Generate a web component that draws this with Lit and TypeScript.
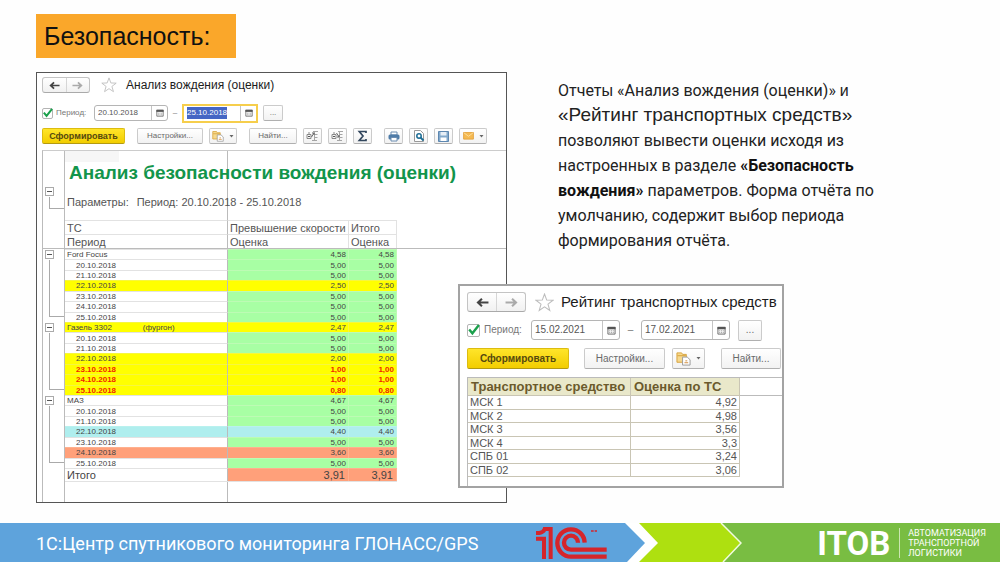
import { LitElement, html, css, svg, nothing } from "lit";
import { customElement, query } from "lit/decorators.js";
import { classMap } from "lit/directives/class-map.js";

const controls = css`
  :host, * { box-sizing: border-box; }
  button, input { font: inherit; color: inherit; margin: 0; }
  button { padding: 0; cursor: pointer; }
  svg { display: block; }
  table { border-spacing: 0; }
  th { font-weight: inherit; text-align: left; }
  .row { display: flex; align-items: center; }
  .nav { display: flex; border: 1px solid #c4c4c4; border-bottom-color: #aaa; border-radius: 3px; background: linear-gradient(#fff, #f1f1f1); }
  .nav button { flex: 1; border: 0; background: none; display: grid; place-items: center; }
  .nav button + button { border-left: 1px solid #d6d6d6; }
  .star { border: 0; background: none; }
  h2 { margin: 0; font-weight: 400; color: #1c1c1c; white-space: nowrap; }
  .btn { border: 1px solid #cbcbcb; border-bottom-color: #b0b0b0; border-radius: 2px; background: linear-gradient(#fff, #f2f2f2); color: #6a6a6a; display: flex; align-items: center; justify-content: center; gap: 5px; white-space: nowrap; }
  .primary { background: linear-gradient(#ffe52a, #f2cd00); border-color: #dcbc10; border-bottom-color: #b39a12; color: #55490f; font-weight: 700; }
  .check { position: relative; display: grid; }
  .check input { appearance: none; border: 1px solid #b4b4b4; border-radius: 2px; background: #fff; grid-area: 1 / 1; }
  .check svg { grid-area: 1 / 1; pointer-events: none; overflow: visible; }
  .label { color: #777; }
  .date { display: flex; border: 1px solid #b5b5b5; border-radius: 3px; background: #fff; color: #555; }
  .date input { border: 0; outline: 0; background: none; min-width: 0; flex: 1; padding: 0 0 0 3px; }
  .date button { border: 0; border-left: 1px solid #c4c4c4; background: none; display: grid; place-items: center; }
  .date.active { border: 2px solid #f6ce4c; border-radius: 0; }
  .date input::selection { background: #4566c4; color: #fff; }
  .dash { color: #777; text-align: center; }
`;

const arrow = (dir: "left" | "right", size: number) => svg`
  <svg width=${size} height=${size} viewBox="0 0 12 12" fill="none" stroke=${dir === "left" ? "#444" : "#aaa"} stroke-width="1.9">
    ${dir === "left" ? svg`<path d="M11.5 6H2M5.5 2.5L1.8 6l3.7 3.5"/>` : svg`<path d="M.5 6H10M6.5 2.5L10.2 6L6.5 9.5"/>`}
  </svg>`;

const navButtons = (size: number) => html`
  <div class="nav">
    <button aria-label="Назад">${arrow("left", size)}</button>
    <button aria-label="Вперёд">${arrow("right", size)}</button>
  </div>`;

const star = (size: number) => html`
  <button class="star" aria-label="В избранное">
    <svg width=${size} height=${size} viewBox="0 0 18 18" fill="#fff" stroke="#bdbdbd" stroke-width="1">
      <path d="M9 1l2.1 5.7 6 .2-4.8 3.7 1.7 5.9L9 13.1l-5 3.4 1.7-5.9L.9 6.9l6-.2z"/>
    </svg>
  </button>`;

const check = (id: string, size: number) => html`
  <span class="check">
    <input type="checkbox" id=${id} checked>
    <svg width=${size} height=${size} viewBox="0 0 12 12" fill="none" stroke="#1ba04c" stroke-width="2.2"><path d="M2 5l3 3.600L11 1"/></svg>
  </span>`;

const calendar = (size: number) => svg`
  <svg width=${size} height=${size} viewBox="0 0 10 10">
    <path d="M1 1.5h8V9H1z" fill="#f4f4f4" stroke="#666"/><path d="M.5 1h9v2.6h-9z" fill="#555"/>
    <path d="M2.5 5.3h5M2.5 7.2h5" stroke="#999" stroke-dasharray="1 1"/>
  </svg>`;

const folder = (size: number) => svg`
  <svg width=${size} height=${size} viewBox="0 0 16 16">
    <path d="M1 2h5l1 1.6h4V12H1z" fill="#f6d98e" stroke="#d6a13a"/><path d="M1.5 5h9" stroke="#d6a13a"/>
    <path d="M7 6.5h5l3 2.8V15H7z" fill="#fff" stroke="#999"/><path d="M9 12.5h4M10 10.5h2" stroke="#d08b3a"/>
  </svg>`;

const caret = () => svg`<svg width="5" height="3" viewBox="0 0 5 3"><path d="M.5 0h4L2.5 2.500z" fill="#666"/></svg>`;

const tree = (up: boolean) => svg`
  <svg width="13" height="12" viewBox="0 0 13 12" fill="none" stroke="#a5a5a5">
    <path d="M1 4.500h4v4H1zM3 2v2" stroke="#888"/><path d="M2 6.500h2" stroke="#555"/>
    <path d="M8.500 1.500v9M7 1.500h5M8.500 4.500h3M8.500 7.500h3M6 10.500h5"/>
    <path d=${up ? "M5.500 7L8 3M6 3h2v2" : "M5.500 3L8 7M8 5v2H6"} stroke="#666"/>
  </svg>`;

const icons = {
  sigma: svg`<svg width="11" height="12" viewBox="0 0 11 12" fill="none" stroke="#33475e" stroke-width="1.700"><path d="M9 3V1.500H2.300L6 6l-3.700 4.500H9V9"/></svg>`,
  print: svg`<svg width="12" height="11" viewBox="0 0 12 11"><path d="M3 1h6v3H3z" fill="#fff" stroke="#6b8cb0"/><rect x=".5" y="3.500" width="11" height="5" rx="1.500" fill="#4f7ca8"/><path d="M3 6.500h6V10H3z" fill="#fff" stroke="#6b8cb0"/></svg>`,
  preview: svg`<svg width="12" height="12" viewBox="0 0 12 12" fill="none"><path d="M1.500.5h6l3 3v8h-9z" fill="#fff" stroke="#999"/><circle cx="6" cy="6" r="2.200" stroke="#1b6c94" stroke-width="1.500"/><path d="M7.500 7.500L10.500 10.500" stroke="#1b6c94" stroke-width="1.800"/></svg>`,
  save: svg`<svg width="11" height="11" viewBox="0 0 11 11"><path d="M.5.5h10v10H.5z" fill="#83a9cc" stroke="#5d87b0"/><path d="M2.500 1h6v3.500h-6z" fill="#e6eef6"/><path d="M2.500 6.500h6V10h-6z" fill="#fff"/></svg>`,
  mail: svg`<svg width="11" height="8" viewBox="0 0 12 9"><path d="M.5.5h11v7.500H.5z" fill="#f5ba52" stroke="#e2a13c"/><path d="M1 1l5 3.800L11 1" fill="none" stroke="#fde0a2"/></svg>`,
};

interface Line { name: string; note?: string; score: string; tone?: string; }

const days = (scores: string[], tones: Record<number, string>): Line[] =>
  scores.map((score, i) => ({ name: `${20 + i}.10.2018`, score, tone: tones[i] }));

const groups: { head: Line; lines: Line[] }[] = [
  { head: { name: "Ford Focus", score: "4,58" }, lines: days(["5,00", "5,00", "2,50", "5,00", "5,00", "5,00"], { 2: "yellow" }) },
  { head: { name: "Газель 3302", note: "(фургон)", score: "2,47", tone: "yellow" }, lines: days(["5,00", "5,00", "2,00", "1,00", "1,00", "0,80"], { 2: "yellow", 3: "alarm", 4: "alarm", 5: "alarm" }) },
  { head: { name: "МАЗ", score: "4,67" }, lines: days(["5,00", "5,00", "4,40", "5,00", "3,60", "5,00"], { 2: "cyan", 4: "salmon" }) },
];

@customElement("driving-report")
export class DrivingReport extends LitElement {
  @query("#to") private to!: HTMLInputElement;

  static styles = [controls, css`
    :host { display: flex; flex-direction: column; border: 1px solid #555; background: #fff; font: 8px/12px "Liberation Sans", Arial, sans-serif; overflow: hidden; }
    .head { height: 24px; padding-left: 5px; }
    .nav { width: 48px; height: 16px; }
    .star { margin: 0 9px 0 11px; }
    h2 { font-size: 12px; }
    .period { height: 32px; padding-left: 5px; }
    .check input { width: 11px; height: 11px; }
    .label { margin: 0 6px 0 3px; width: 32px; white-space: nowrap; }
    .date { width: 74px; height: 16px; }
    .date button { width: 16px; }
    .date.active { width: 76px; height: 19px; }
    .dash { width: 14px; }
    .more { width: 20px; height: 17px; margin-left: 5px; }
    .tools { height: 21px; padding: 0 5px 7px; gap: 6px; }
    .btn { height: 16px; min-width: 19px; }
    .tools .primary { width: 83px; font-size: 9px; }
    .settings { width: 66px; margin-left: 6px; }
    .variant { width: 28px; }
    .find { width: 48px; margin-left: 6px; }
    .print { margin-left: 6px; }
    .mail { width: 28px; }
    .sheet { flex: 1; display: grid; grid-template-columns: 22px 1fr; margin-left: 5px; border-top: 1px solid #ccc; border-left: 1px solid #bbb; }
    .gutter { border-right: 1px solid #bbb; display: flex; flex-direction: column; }
    .node { height: 73px; display: grid; grid-template: 11px 1fr 5px / 6px 1fr; }
    .node.top { height: 98px; padding: 35px 0 34px; border-bottom: 1px solid #bbb; }
    .node button { grid-area: 1 / 1 / 2 / 3; width: 9px; height: 9px; margin: 1px 2px; border: 1px solid #aaa; background: #fff; display: grid; place-items: center; }
    .node button::before { content: ""; width: 5px; height: 1px; background: #555; }
    .node i { grid-area: 2 / 2 / 3 / 3; border: solid #aaa; border-width: 0 0 1px 1px; }
    .page { background: linear-gradient(#bbb, #bbb) 162px 0 / 1px 100% no-repeat; }
    .intro { height: 69px; }
    .cell { width: 54px; height: 11px; background: #f6f6f6; }
    h1 { margin: 0; padding: 0 4px; font-size: 19px; line-height: 22px; color: #12954b; white-space: nowrap; }
    .params { margin: 0; padding: 11px 2px 0; font-size: 11px; line-height: 14px; color: #555; display: flex; gap: 8px; }
    table, thead { display: block; }
    thead { border-bottom: 1px solid #bbb; }
    tr { display: grid; grid-template-columns: 163px 121px 48px; width: 332px; }
    th, td { padding: 0 2px; border: 0 solid #e2e2e2; border-top-width: 1px; border-right-width: 1px; white-space: nowrap; overflow: hidden; display: flex; align-items: center; }
    tr > :first-child { border-right-color: #bbb; }
    thead th { font-size: 11px; color: #555; height: 14px; }
    tbody { display: grid; grid-auto-rows: minmax(0, 1fr); height: 73px; line-height: 9px; color: #444; }
    tbody td { justify-content: flex-end; background: #a8ffa4; border-color: #bdfbb4; }
    tbody .day { padding-left: 11px; }
    .note { margin-left: 31px; }
    .yellow > *, .alarm > * { background: #ff0; border-color: #f6f640; }
    .alarm > * { color: #f02800; font-weight: 700; }
    .cyan > * { background: #afeeee; border-color: #b9f1ee; }
    .salmon > * { background: #ffa07a; border-color: #ffb08e; }
    tfoot { display: block; color: #444; font-size: 11px; }
    tfoot tr { height: 14px; border-bottom: 1px solid #e2e2e2; }
    tfoot td { background: #ffa07a; justify-content: flex-end; padding-right: 3px; border-color: #ffb08e; }
  `];

  firstUpdated() {
    this.to.focus();
    this.to.select();
  }

  private line(l: Line, day: boolean) {
    return html`<tr class=${l.tone ?? ""}>
      <th scope="row" class=${classMap({ day })}>${l.name}${l.note ? html`<span class="note">${l.note}</span>` : nothing}</th>
      <td>${l.score}</td><td>${l.score}</td>
    </tr>`;
  }

  render() {
    return html`
      <div class="row head">${navButtons(11)}${star(16)}<h2>Анализ вождения (оценки)</h2></div>
      <div class="row period">
        ${check("period", 11)}<label class="label" for="period">Период:</label>
        <div class="date"><input aria-label="Начало периода" value="20.10.2018"><button aria-label="Выбрать начало">${calendar(8)}</button></div>
        <span class="dash">–</span>
        <div class="date active"><input id="to" aria-label="Конец периода" value="25.10.2018"><button aria-label="Выбрать конец">${calendar(8)}</button></div>
        <button class="btn more">...</button>
      </div>
      <div class="row tools">
        <button class="btn primary">Сформировать</button>
        <button class="btn settings">Настройки...</button>
        <button class="btn variant" aria-label="Варианты">${folder(12)}${caret()}</button>
        <button class="btn find">Найти...</button>
        <button class="btn" aria-label="Свернуть группы">${tree(true)}</button>
        <button class="btn" aria-label="Развернуть группы">${tree(false)}</button>
        <button class="btn" aria-label="Сумма">${icons.sigma}</button>
        <button class="btn print" aria-label="Печать">${icons.print}</button>
        <button class="btn" aria-label="Просмотр">${icons.preview}</button>
        <button class="btn" aria-label="Сохранить">${icons.save}</button>
        <button class="btn mail" aria-label="Отправить">${icons.mail}${caret()}</button>
      </div>
      <div class="sheet">
        <div class="gutter">
          <div class="node top"><button aria-label="Свернуть заголовок"></button><i></i></div>
          ${groups.map((g) => html`<div class="node"><button aria-label="Свернуть ${g.head.name}"></button><i></i></div>`)}
        </div>
        <div class="page">
          <div class="intro">
            <div class="cell"></div>
            <h1>Анализ безопасности вождения (оценки)</h1>
            <p class="params"><span>Параметры:</span><span>Период: 20.10.2018 - 25.10.2018</span></p>
          </div>
          <table>
            <thead>
              <tr><th>ТС</th><th>Превышение скорости</th><th>Итого</th></tr>
              <tr><th>Период</th><th>Оценка</th><th>Оценка</th></tr>
            </thead>
            ${groups.map((g) => html`<tbody>${this.line(g.head, false)}${g.lines.map((l) => this.line(l, true))}</tbody>`)}
            <tfoot><tr><th scope="row">Итого</th><td>3,91</td><td>3,91</td></tr></tfoot>
          </table>
        </div>
      </div>`;
  }
}

const rating = [["МСК 1", "4,92"], ["МСК 2", "4,98"], ["МСК 3", "3,56"], ["МСК 4", "3,3"], ["СПБ 01", "3,24"], ["СПБ 02", "3,06"]];

@customElement("rating-report")
export class RatingReport extends LitElement {
  static styles = [controls, css`
    :host { display: block; border: 2px solid #a3a3a3; background: #fff; font: 10px/14px "Liberation Sans", Arial, sans-serif; padding: 6px 0 0 7px; overflow: hidden; }
    .nav { width: 59px; height: 20px; }
    .star { margin: 0 7px 0 9px; }
    h2 { font-size: 15px; line-height: 20px; }
    .period { height: 20px; margin-top: 8px; }
    .check input { width: 13px; height: 13px; }
    .label { width: 46px; padding-left: 4px; margin-right: 5px; white-space: nowrap; }
    .date { width: 89px; height: 20px; }
    .date button { width: 17px; }
    .dash { width: 21px; }
    .more { width: 24px; margin-left: 8px; }
    .tools { margin-top: 8px; }
    .btn { height: 21px; }
    .tools .primary { width: 102px; }
    .settings { width: 81px; margin-left: 15px; }
    .variant { width: 33px; margin: 0 16px 0 7px; }
    .find { width: 60px; }
    .sheet { margin-top: 8px; border: solid #bbb; border-width: 1px 0 0 1px; padding-bottom: 9px; background: linear-gradient(#bbb, #bbb) 0 17px / 100% 1px no-repeat; }
    table, thead { display: block; }
    tr { display: grid; grid-template-columns: 163px 109px; width: 272px; }
    th, td { border: solid #c9c5b4; border-width: 0 1px 1px 0; padding: 0 2px; display: flex; align-items: center; color: #555; white-space: nowrap; }
    thead th { height: 18px; background: #e9e8ca; font-size: 13px; font-weight: 700; color: #6b5a2c; padding: 0 3px; }
    tbody { display: grid; grid-auto-rows: minmax(0, 1fr); height: 81px; font-size: 11px; line-height: 12px; }
    td { justify-content: flex-end; }
  `];

  render() {
    return html`
      <div class="row">${navButtons(13)}${star(19)}<h2>Рейтинг транспортных средств</h2></div>
      <div class="row period">
        ${check("period", 13)}<label class="label" for="period">Период:</label>
        <div class="date"><input aria-label="Начало периода" value="15.02.2021"><button aria-label="Выбрать начало">${calendar(9)}</button></div>
        <span class="dash">–</span>
        <div class="date"><input aria-label="Конец периода" value="17.02.2021"><button aria-label="Выбрать конец">${calendar(9)}</button></div>
        <button class="btn more">...</button>
      </div>
      <div class="row tools">
        <button class="btn primary">Сформировать</button>
        <button class="btn settings">Настройки...</button>
        <button class="btn variant" aria-label="Варианты">${folder(15)}${caret()}</button>
        <button class="btn find">Найти...</button>
      </div>
      <div class="sheet">
        <table>
          <thead><tr><th>Транспортное средство</th><th>Оценка по ТС</th></tr></thead>
          <tbody>${rating.map(([n, v]) => html`<tr><th scope="row">${n}</th><td>${v}</td></tr>`)}</tbody>
        </table>
      </div>`;
  }
}

@customElement("slide-footer")
export class SlideFooter extends LitElement {
  static styles = css`
    :host, * { box-sizing: border-box; }
    :host { display: grid; grid-template-columns: 625fr 117px 258fr; height: 39px; color: #fff; font-family: Roboto, sans-serif; background: #79bd42; }
    .product { background: #5ea3dc; display: flex; align-items: center; justify-content: space-between; padding: 0 18px 0 36px; font-size: 18px; line-height: 24px; white-space: nowrap; }
    .product span { padding-top: 3px; }
    .company { display: flex; align-items: center; justify-content: flex-end; padding-right: 14px; gap: 9px; }
    .brand { font-size: 33px; line-height: 36px; font-weight: 700; padding-top: 3px; }
    .slogan { border-left: 1px solid #cbe6b0; padding-left: 8px; font-size: 9px; line-height: 10px; }
    svg { display: block; flex: none; }
  `;

  render() {
    return html`
      <div class="product">
        <span>1С:Центр спутникового мониторинга ГЛОНАСС/GPS</span>
        <svg width="71" height="32" viewBox="0 0 213 96" fill="none" stroke="#d5252b" role="img" aria-label="1С">
          <path d="M0 18h10Q23 16 26 6h18v90" stroke-width="12"/>
          <path d="M0 35h24v61" stroke-width="12"/>
          <path d="M146 47A41 41 0 1 0 105 89H212" stroke-width="13"/>
          <path d="M126 47A21 21 0 1 0 105 68H212" stroke-width="13"/>
          <path d="M165 12h8m3 0h7" stroke-width="4"/>
        </svg>
      </div>
      <svg width="117" height="39" viewBox="0 0 117 39">
        <path d="M0 0h70v39H0z" fill="#fff"/>
        <path d="M0 0l20 20L2 39H0z" fill="#5ea3dc"/>
        <path d="M14 0h82l20 20-18 19H14l19-19z" fill="#aee010"/>
        <path d="M96 0l20 20-18 19" fill="none" stroke="#f0fae0" stroke-width="1.500"/>
      </svg>
      <div class="company"><span class="brand">ITOB</span><span class="slogan">АВТОМАТИЗАЦИЯ<br>ТРАНСПОРТНОЙ<br>ЛОГИСТИКИ</span></div>`;
  }
}

@customElement("app-root")
export class AppRoot extends LitElement {
  static styles = css`
    :host { display: flex; flex-direction: column; min-height: 100vh; background: #fefefe; }
    main { flex: 1; padding: 14px 36px 20px; display: flex; flex-direction: column; align-items: flex-start; }
    .title { margin: 0 0 14px; padding: 0 26px 0 8px; background: #faa72a; color: #111; font: 25px/44px "Liberation Sans", Arial, sans-serif; }
    .content { flex: 1; align-self: stretch; display: grid; grid-template-columns: minmax(0, 471fr) minmax(0, 406fr); gap: 51px; }
    .side { padding-top: 6px; }
    p { margin: 0 0 31px; font: 16px/25px Roboto, sans-serif; color: #222; white-space: nowrap; }
    .plain { font-family: "Liberation Sans", Arial, sans-serif; }
    .wide { font-size: 19px; line-height: 24px; }
    b { color: #111; }
    rating-report { position: relative; margin-left: -100px; max-width: 326px; }
  `;

  render() {
    return html`
      <main>
        <h1 class="title">Безопасность:</h1>
        <div class="content">
          <driving-report></driving-report>
          <div class="side">
            <p>
              Отчет<span class="plain">ы</span> «Анализ вождения (оценки)» <span class="plain">и</span><br>
              <span class="plain wide">«Рейтинг транспортных средств»</span><br>
              позволя<span class="plain">ют</span> вывести оценки исходя из<br>
              настроенных в разделе <b>«Безопасность<br>вождения»</b> параметров. Форма отчёта по<br>
              умолчанию, содержит выбор периода<br>
              формирования отчёта.
            </p>
            <rating-report></rating-report>
          </div>
        </div>
      </main>
      <slide-footer></slide-footer>`;
  }
}
